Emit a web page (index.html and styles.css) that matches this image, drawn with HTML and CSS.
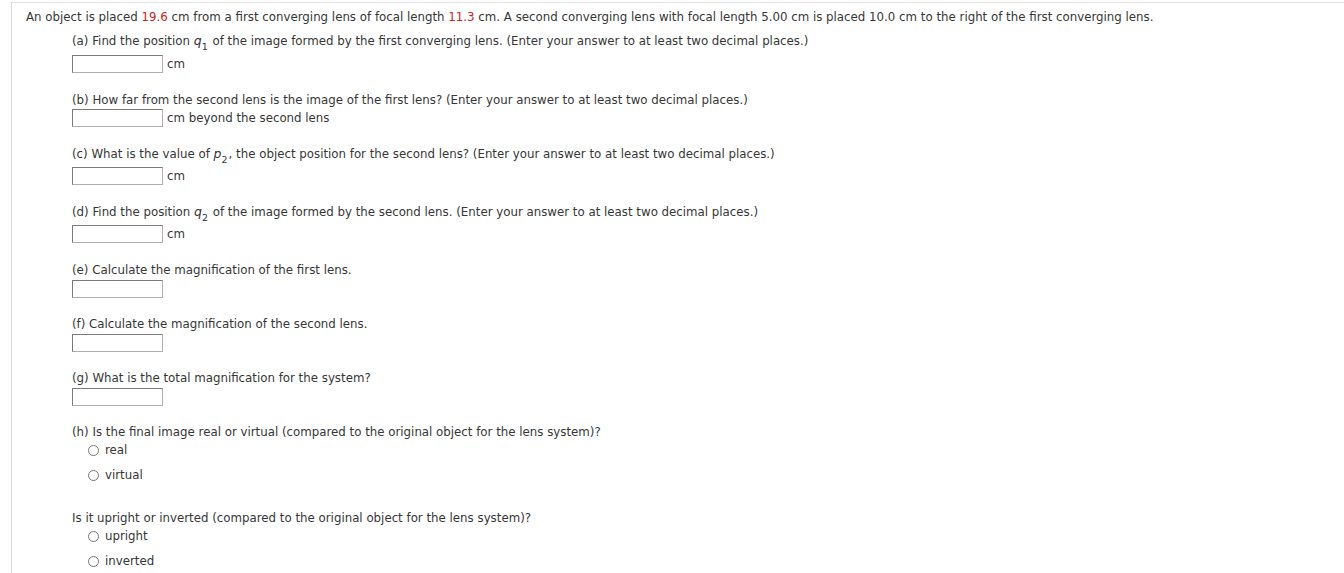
FILE: index.html
```html
<!DOCTYPE html>
<html>
<head>
<meta charset="utf-8">
<link rel="stylesheet" href="styles.css">
</head>
<body>
<div class="frame">
  <div class="problem">
    <p class="intro">An object is placed <span class="red">19.6</span> cm from a first converging lens of focal length <span class="red">11.3</span> cm. A second converging lens with focal length 5.00 cm is placed 10.0 cm to the right of the first converging lens.</p>
    <div class="parts">
      <div class="part part-wide">
        <p class="q">(a) Find the position <i class="var">q</i><sub>1</sub> of the image formed by the first converging lens. (Enter your answer to at least two decimal places.)</p>
        <div class="ans ans-sub-first"><span class="box"></span><span class="unit">cm</span></div>
      </div>
      <div class="part part-wide">
        <p class="q">(b) How far from the second lens is the image of the first lens? (Enter your answer to at least two decimal places.)</p>
        <div class="ans ans-tight"><span class="box"></span><span class="unit">cm beyond the second lens</span></div>
      </div>
      <div class="part part-wide">
        <p class="q">(c) What is the value of <i class="var">p</i><sub>2</sub>, the object position for the second lens? (Enter your answer to at least two decimal places.)</p>
        <div class="ans ans-sub"><span class="box"></span><span class="unit">cm</span></div>
      </div>
      <div class="part part-wide">
        <p class="q">(d) Find the position <i class="var">q</i><sub>2</sub> of the image formed by the second lens. (Enter your answer to at least two decimal places.)</p>
        <div class="ans ans-sub"><span class="box"></span><span class="unit">cm</span></div>
      </div>
      <div class="part">
        <p class="q">(e) Calculate the magnification of the first lens.</p>
        <div class="ans"><span class="box"></span></div>
      </div>
      <div class="part">
        <p class="q">(f) Calculate the magnification of the second lens.</p>
        <div class="ans"><span class="box"></span></div>
      </div>
      <div class="part">
        <p class="q">(g) What is the total magnification for the system?</p>
        <div class="ans"><span class="box"></span></div>
      </div>
      <div class="part part-radio">
        <p class="q">(h) Is the final image real or virtual (compared to the original object for the lens system)?</p>
        <div class="radios">
          <label class="opt"><span class="circle"></span>real</label>
          <label class="opt"><span class="circle"></span>virtual</label>
        </div>
      </div>
      <div class="part">
        <p class="q">Is it upright or inverted (compared to the original object for the lens system)?</p>
        <div class="radios">
          <label class="opt"><span class="circle"></span>upright</label>
          <label class="opt"><span class="circle"></span>inverted</label>
        </div>
      </div>
    </div>
  </div>
</div>
</body>
</html>
```

FILE: styles.css
```css
html, body {
  margin: 0;
  padding: 0;
  background: #ffffff;
}
body {
  font-family: "DejaVu Sans", Verdana, sans-serif;
  font-size: 11.8px;
  color: #363636;
}
.frame {
  margin-left: 11px;
  margin-top: 2px;
  border-left: 1px solid #d8d8d8;
  border-top: 1px solid #e2e2e2;
  height: 580px;
}
.problem {
  padding: 5px 0 0 14px;
}
p {
  margin: 0;
}
.intro {
  line-height: 18px;
}
.red {
  color: #cc2222;
}
.parts {
  margin-left: 46px;
  margin-top: 6px;
}
.part {
  margin-bottom: 17px;
}
.part-wide {
  margin-bottom: 18px;
}
.part-radio {
  margin-bottom: 25px;
}
.q {
  line-height: 18px;
}
.var {
  font-style: italic;
  font-size: 12.5px;
  line-height: 0;
}
sub {
  font-size: 9.5px;
  line-height: 0;
  vertical-align: -5px;
  margin-right: 1px;
}
.ans {
  display: flex;
  align-items: center;
  gap: 4px;
  margin-top: 1px;
}
.ans-tight {
  margin-top: 0;
}
.ans-sub {
  margin-top: 4px;
}
.ans-sub-first {
  margin-top: 5px;
}
.box {
  display: block;
  width: 89px;
  height: 16px;
  border: 1px solid #8a8a8a;
  border-color: #7a7a7a #b0b0b0 #b0b0b0 #7a7a7a;
  background: #fff;
}
.unit {
  line-height: 18px;
}
.radios {
  display: flex;
  flex-direction: column;
  gap: 7px;
  padding-left: 16px;
}
.opt {
  display: flex;
  align-items: center;
  gap: 6px;
  line-height: 18px;
}
.circle {
  display: block;
  width: 9px;
  height: 9px;
  border: 1px solid #777;
  border-radius: 50%;
}
```
